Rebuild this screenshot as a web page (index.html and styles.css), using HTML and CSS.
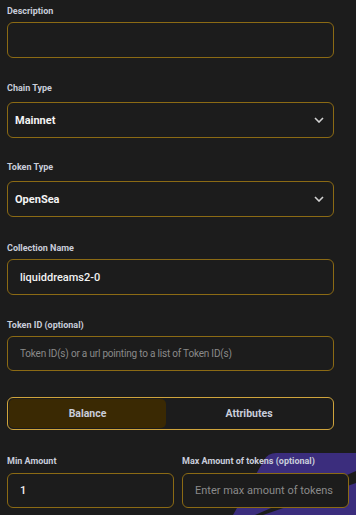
FILE: index.html
```html
<!DOCTYPE html>
<html lang="en">
<head>
    <meta charset="UTF-8">
    <meta name="viewport" content="width=device-width, initial-scale=1.0">
    <title>Token Gate</title>
    <link rel="stylesheet" href="styles.css">
</head>
<body>

<!-- Decoración morada de fondo, esquina inferior derecha -->
<svg class="bg-shape" width="136" height="75" viewBox="0 0 136 75">
    <path d="M13 75 L44 20 Q48 13 56 13 L136 13 L136 75 Z" fill="#3b2d7d"/>
    <polygon points="35,75 43,75 136,43 136,31" fill="#1c1c1c"/>
</svg>

<form class="form">
    <div class="field">
        <label class="field-label">Description</label>
        <input class="input input-tall" type="text">
    </div>

    <div class="field">
        <label class="field-label field-label-select">Chain Type</label>
        <div class="select-box">
            <span>Mainnet</span>
            <svg class="chevron" width="10" height="6" viewBox="0 0 10 6"><path d="M1 1 L5 5 L9 1" fill="none" stroke="#d2d2d2" stroke-width="1.6"/></svg>
        </div>
    </div>

    <div class="field field-tight">
        <label class="field-label field-label-select">Token Type</label>
        <div class="select-box">
            <span>OpenSea</span>
            <svg class="chevron" width="10" height="6" viewBox="0 0 10 6"><path d="M1 1 L5 5 L9 1" fill="none" stroke="#d2d2d2" stroke-width="1.6"/></svg>
        </div>
    </div>

    <div class="field">
        <label class="field-label">Collection Name</label>
        <input class="input input-tall" type="text" value="liquiddreams2-0">
    </div>

    <div class="field">
        <label class="field-label">Token ID (optional)</label>
        <input class="input input-small-ph" type="text" placeholder="Token ID(s) or a url pointing to a list of Token ID(s)">
    </div>

    <div class="toggle">
        <div class="toggle-option active">Balance</div>
        <div class="toggle-option">Attributes</div>
    </div>

    <div class="amount-row">
        <div class="field">
            <label class="field-label">Min Amount</label>
            <input class="input" type="text" value="1">
        </div>
        <div class="field">
            <label class="field-label">Max Amount of tokens (optional)</label>
            <input class="input" type="text" placeholder="Enter max amount of tokens">
        </div>
    </div>
</form>

</body>
</html>
```

FILE: styles.css
```css
body {
    font-family: Roboto, "Liberation Sans", sans-serif;
    background-color: #1c1c1c;
    color: #f2f2f2;
    margin: 0;
    padding: 0;
    overflow: hidden;
}

.bg-shape {
    position: absolute;
    left: 220px;
    top: 440px;
    z-index: 0;
}

.form {
    position: relative;
    z-index: 1;
    display: flex;
    flex-direction: column;
    gap: 24px;
    width: 327px;
    padding: 5px 0 0 7px;
}

.field {
    display: flex;
    flex-direction: column;
}

.field-tight {
    margin-top: -1px;
    margin-bottom: 1px;
}

.field-label {
    font-size: 9px;
    font-weight: 700;
    line-height: 12px;
    color: #c9cdda;
    margin-bottom: 5px;
    white-space: nowrap;
}

.field-label-select {
    margin-bottom: 8px;
}

.input {
    box-sizing: border-box;
    height: 35px;
    width: 100%;
    padding: 0 12px;
    background-color: #1c1c1c;
    border: 1px solid #8b6a14;
    border-radius: 6px;
    color: #f2f2f2;
    font-family: inherit;
    font-size: 11px;
    font-weight: 500;
    outline: none;
}

.input-tall {
    height: 36px;
}

.input::placeholder {
    color: #8a8a8a;
    font-weight: 400;
}

.input-small-ph::placeholder {
    font-size: 10px;
    letter-spacing: -0.2px;
}

.select-box {
    box-sizing: border-box;
    height: 36px;
    display: flex;
    align-items: center;
    justify-content: space-between;
    padding: 0 9px 0 7px;
    border: 1px solid #8b6a14;
    border-radius: 6px;
    font-size: 11px;
    font-weight: 700;
    color: #f4f4f4;
}

.toggle {
    box-sizing: border-box;
    height: 33px;
    margin-top: 2px;
    display: flex;
    padding: 1px;
    border: 1px solid #cfa43c;
    border-radius: 6px;
}

.toggle-option {
    flex: 1;
    display: flex;
    align-items: center;
    justify-content: center;
    font-size: 10.5px;
    font-weight: 700;
    color: #c9cdda;
    border-radius: 5px;
}

.toggle-option.active {
    flex: 0 0 157px;
    background-color: #3a2903;
}

.amount-row {
    display: grid;
    grid-template-columns: 167px 167px;
    gap: 8px;
    margin-top: 1px;
}

.amount-row .field-label {
    margin-bottom: 6px;
}

.amount-row .input {
    padding-left: 12px;
}
```
